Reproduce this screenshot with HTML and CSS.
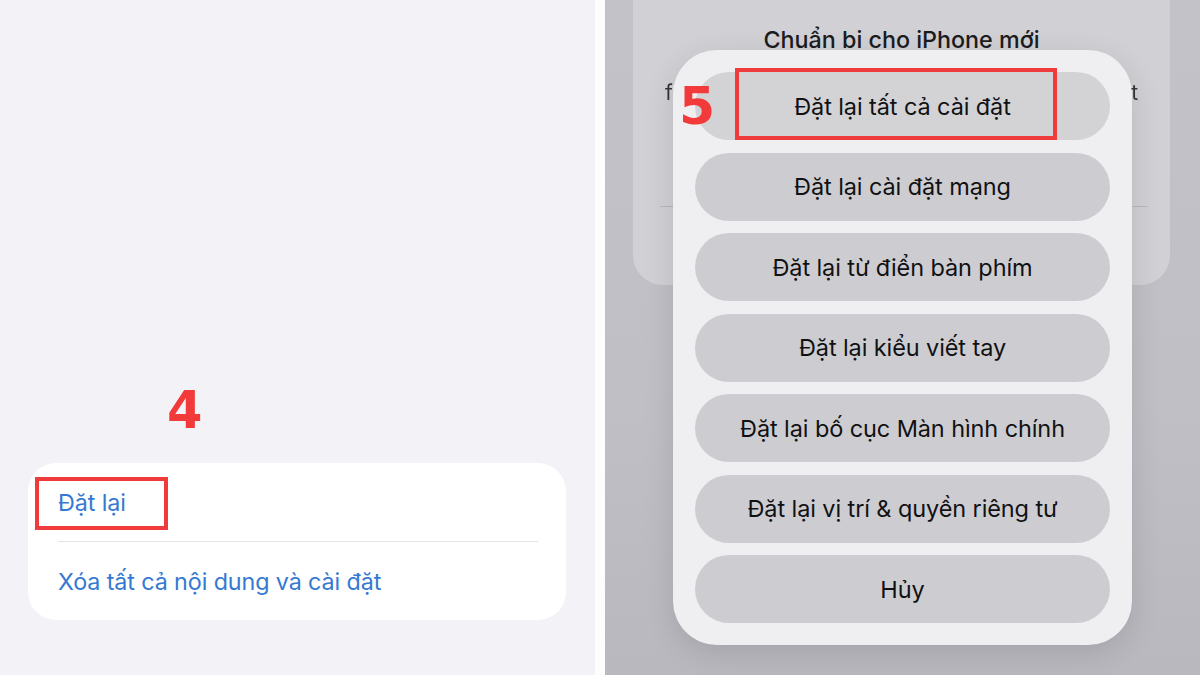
FILE: index.html
```html
<!DOCTYPE html>
<html lang="vi">
<head>
<meta charset="utf-8">
<title>Đặt lại iPhone</title>
<link rel="stylesheet" href="styles.css">
</head>
<body>
<div class="page">
  <section class="left">
    <span class="step step-4">4</span>
    <div class="group">
      <div class="row">
        <span class="link">Đặt lại</span>
        <span class="mark mark-4"></span>
      </div>
      <div class="sep"></div>
      <div class="row">
        <span class="link">Xóa tất cả nội dung và cài đặt</span>
      </div>
    </div>
  </section>
  <section class="right">
    <div class="stack">
      <div class="bgcard">
        <div class="bgtitle">Chuẩn bị cho iPhone mới</div>
        <div class="bgline"><span>f</span><span>t</span></div>
        <div class="bgsep"></div>
      </div>
      <div class="sheet">
        <div class="btn btn-first">Đặt lại tất cả cài đặt</div>
        <div class="btn">Đặt lại cài đặt mạng</div>
        <div class="btn">Đặt lại từ điển bàn phím</div>
        <div class="btn">Đặt lại kiểu viết tay</div>
        <div class="btn">Đặt lại bố cục Màn hình chính</div>
        <div class="btn">Đặt lại vị trí &amp; quyền riêng tư</div>
        <div class="btn">Hủy</div>
      </div>
    </div>
    <span class="step step-5">5</span>
    <span class="mark mark-5"></span>
  </section>
</div>
</body>
</html>
```

FILE: styles.css
```css
* { box-sizing: border-box; }
html, body { margin: 0; padding: 0; }
body {
  width: 1200px;
  height: 675px;
  overflow: hidden;
  background: #fdfdfd;
  font-family: Inter, "Noto Sans", "DejaVu Sans", sans-serif;
}
.page {
  display: flex;
  width: 1200px;
  height: 675px;
}

/* LEFT */
.left {
  position: relative;
  width: 595px;
  height: 675px;
  background: #f2f2f7;
  display: flex;
  flex-direction: column;
  justify-content: flex-end;
  padding: 0 29px 55px 28px;
}
.group {
  background: #ffffff;
  border-radius: 28px;
  padding: 0 28px 0 30px;
}
.row {
  position: relative;
  height: 78px;
  display: flex;
  align-items: center;
}
.link {
  color: #3579d3;
  font-size: 23.3px;
  letter-spacing: -0.1px;
}
.sep {
  height: 1px;
  background: #e3e3e8;
}
.step {
  position: absolute;
  color: #f33a3a;
  font-family: "DejaVu Sans", sans-serif;
  font-weight: 700;
  line-height: 1;
}
.step-4 {
  left: 167px;
  top: 385px;
  font-size: 51px;
}
.mark {
  position: absolute;
  border: 4px solid #ef3b3b;
}
.mark-4 {
  left: -23px;
  top: 14px;
  width: 133px;
  height: 53px;
}

/* RIGHT */
.right {
  position: relative;
  width: 595px;
  height: 675px;
  margin-left: 10px;
  background: linear-gradient(#c3c2c8, #c0bfc5 60%, #b9b8be);
  overflow: hidden;
}
.stack {
  display: grid;
}
.bgcard, .sheet {
  grid-area: 1 / 1;
  align-self: start;
}
.bgcard {
  margin: -40px 30px 0 28px;
  height: 325px;
  background: #d1d1d5;
  border-radius: 30px;
  padding-top: 64px;
  display: flex;
  flex-direction: column;
  align-items: center;
}
.bgtitle {
  font-size: 23.3px;
  font-weight: 500;
  color: #1c1c1e;
  line-height: 32px;
}
.bgline {
  align-self: stretch;
  display: flex;
  justify-content: space-between;
  margin: 24px 32px 0 32px;
  font-size: 21px;
  color: #333;
  filter: blur(0.4px);
}
.bgsep {
  align-self: stretch;
  height: 1px;
  background: #b8b8bd;
  margin: 101px 22px 0 27px;
}
.sheet {
  margin: 50px 68px 0 68px;
  background: #efeff1;
  border-radius: 44px;
  padding: 22px;
  display: flex;
  flex-direction: column;
  gap: 12.5px;
  box-shadow: 0 8px 30px rgba(0, 0, 0, 0.12);
}
.btn {
  height: 68px;
  border-radius: 34px;
  background: #cdcdd1;
  display: flex;
  align-items: center;
  justify-content: center;
  font-size: 23.5px;
  color: #111113;
  letter-spacing: -0.1px;
}
.btn-first {
  background: #d3d3d6;
}
.step-5 {
  left: 74px;
  top: 80px;
  font-size: 52px;
}
.mark-5 {
  left: 130px;
  top: 68px;
  width: 322px;
  height: 72px;
}
```
